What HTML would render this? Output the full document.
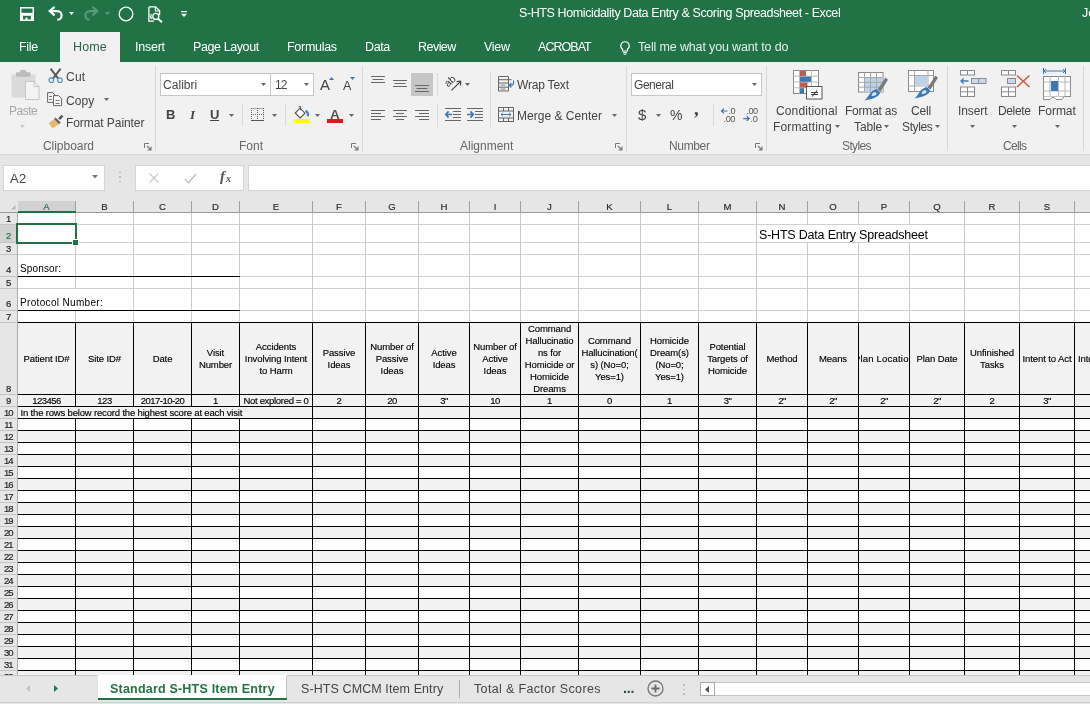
<!DOCTYPE html>
<html lang="en">
<head>
<meta charset="utf-8">
<title>S-HTS Homicidality Data Entry &amp; Scoring Spreadsheet - Excel</title>
<style>
html,body{margin:0;padding:0;}
body{width:1090px;height:704px;overflow:hidden;background:#e6e6e6;font-family:"Liberation Sans",sans-serif;}
#app{position:relative;width:1090px;height:704px;overflow:hidden;background:#e6e6e6;}
.t{will-change:transform;position:absolute;white-space:nowrap;line-height:1;}
svg{position:absolute;overflow:visible;}
.cell{-webkit-text-stroke:0.15px #000;position:absolute;overflow:hidden;display:flex;align-items:center;justify-content:center;text-align:center;font-size:9.5px;line-height:12px;color:#000;box-sizing:border-box;}
.cell span{display:block;white-space:nowrap;}
.hdr{position:absolute;font-size:9.6px;line-height:12px;color:#262626;text-align:center;-webkit-text-stroke:0.15px #262626;}
.rn{position:absolute;left:0;width:16.5px;font-size:9.5px;line-height:12px;color:#1a1a1a;text-align:center;letter-spacing:-1px;-webkit-text-stroke:0.2px #1a1a1a;}

</style>
</head>
<body>
<div id="app">
<div style="position:absolute;left:0px;top:0px;width:1090px;height:62px;background:#217346;"></div>
<div style="position:absolute;left:60px;top:32px;width:60px;height:30px;background:#f1f1f1;"></div>
<div style="position:absolute;left:0px;top:62px;width:1090px;height:92px;background:#f1f1f1;"></div>
<div style="position:absolute;left:0px;top:154px;width:1090px;height:1px;background:#d6d6d6;"></div>
<span class="t" style="left:518.60px;top:7.25px;font-size:12.5px;color:#fff;letter-spacing:-0.395px;">S-HTS Homicidality Data Entry &amp; Scoring Spreadsheet - Excel</span>
<span class="t" style="left:1081.60px;top:7.25px;font-size:12.5px;color:#fff;">Je</span>
<span class="t" style="left:18.60px;top:40.75px;font-size:12.5px;color:#fff;letter-spacing:-0.339px;">File</span>
<span class="t" style="left:72.60px;top:40.75px;font-size:12.5px;color:#2a6446;letter-spacing:0.114px;">Home</span>
<span class="t" style="left:134.60px;top:40.75px;font-size:12.5px;color:#fff;letter-spacing:-0.244px;">Insert</span>
<span class="t" style="left:192.60px;top:40.75px;font-size:12.5px;color:#fff;letter-spacing:-0.400px;">Page Layout</span>
<span class="t" style="left:286.60px;top:40.75px;font-size:12.5px;color:#fff;letter-spacing:-0.287px;">Formulas</span>
<span class="t" style="left:364.60px;top:40.75px;font-size:12.5px;color:#fff;letter-spacing:-0.402px;">Data</span>
<span class="t" style="left:417.60px;top:40.75px;font-size:12.5px;color:#fff;letter-spacing:-0.533px;">Review</span>
<span class="t" style="left:483.60px;top:40.75px;font-size:12.5px;color:#fff;letter-spacing:-0.269px;">View</span>
<span class="t" style="left:537.60px;top:40.75px;font-size:12.5px;color:#fff;letter-spacing:-0.957px;">ACROBAT</span>
<span class="t" style="left:637.60px;top:40.75px;font-size:12.5px;color:#e3efe8;letter-spacing:-0.146px;">Tell me what you want to do</span>
<div style="position:absolute;left:155px;top:66px;width:1px;height:85px;background:#d8d8d8;"></div>
<div style="position:absolute;left:362px;top:66px;width:1px;height:85px;background:#d8d8d8;"></div>
<div style="position:absolute;left:626px;top:66px;width:1px;height:85px;background:#d8d8d8;"></div>
<div style="position:absolute;left:766px;top:66px;width:1px;height:85px;background:#d8d8d8;"></div>
<div style="position:absolute;left:947px;top:66px;width:1px;height:85px;background:#d8d8d8;"></div>
<div style="position:absolute;left:1083px;top:66px;width:1px;height:85px;background:#d8d8d8;"></div>
<span class="t" style="left:43.00px;top:140.00px;font-size:12px;color:#666;letter-spacing:-0.042px;">Clipboard</span>
<span class="t" style="left:239.00px;top:140.00px;font-size:12px;color:#666;">Font</span>
<span class="t" style="left:459.90px;top:140.00px;font-size:12px;color:#666;letter-spacing:-0.008px;">Alignment</span>
<span class="t" style="left:668.50px;top:140.00px;font-size:12px;color:#666;letter-spacing:-0.348px;">Number</span>
<span class="t" style="left:842.00px;top:140.00px;font-size:12px;color:#666;letter-spacing:-0.615px;">Styles</span>
<span class="t" style="left:1003.30px;top:140.00px;font-size:12px;color:#666;letter-spacing:-0.654px;">Cells</span>
<span class="t" style="left:9.20px;top:104.50px;font-size:12px;color:#a8a8a8;letter-spacing:-0.498px;">Paste</span>
<span class="t" style="left:66.00px;top:71.00px;font-size:12px;color:#444;letter-spacing:0.237px;">Cut</span>
<span class="t" style="left:66.00px;top:94.50px;font-size:12px;color:#444;letter-spacing:0.096px;">Copy</span>
<span class="t" style="left:66.00px;top:117.00px;font-size:12px;color:#444;letter-spacing:-0.069px;">Format Painter</span>
<div style="position:absolute;left:160px;top:73px;width:111px;height:23px;background:#fff;box-sizing:border-box;border:1px solid #c6c6c6;"></div>
<div style="position:absolute;left:270px;top:73px;width:44px;height:23px;background:#fff;box-sizing:border-box;border:1px solid #c6c6c6;"></div>
<span class="t" style="left:163.10px;top:78.50px;font-size:12px;color:#444;letter-spacing:0.041px;">Calibri</span>
<span class="t" style="left:274.60px;top:78.50px;font-size:12px;color:#444;letter-spacing:-1.030px;">12</span>
<span class="t" style="left:165.60px;top:107.50px;font-size:13px;color:#444;font-weight:bold;">B</span>
<span class="t" style="left:189.60px;top:107.50px;font-size:13px;color:#444;font-weight:bold;font-style:italic;font-family:'Liberation Serif', serif;">I</span>
<span class="t" style="left:210.10px;top:107.50px;font-size:13px;color:#444;font-weight:bold;">U</span>
<div style="position:absolute;left:210px;top:120px;width:9px;height:1px;background:#444;"></div>
<div style="position:absolute;left:242px;top:104px;width:1px;height:22px;background:#dadada;"></div>
<div style="position:absolute;left:285px;top:104px;width:1px;height:22px;background:#dadada;"></div>
<span class="t" style="left:320.10px;top:77.00px;font-size:15px;color:#444;">A</span>
<span class="t" style="left:343.10px;top:79.75px;font-size:12.5px;color:#444;">A</span>
<span class="t" style="left:329.90px;top:107.75px;font-size:13.5px;color:#555;font-weight:bold;">A</span>
<div style="position:absolute;left:327px;top:119px;width:16px;height:4px;background:#e2171c;"></div>
<div style="position:absolute;left:294px;top:119px;width:16px;height:4px;background:#ffff00;"></div>
<div style="position:absolute;left:411px;top:73px;width:22px;height:23px;background:#c6c6c6;"></div>
<div style="position:absolute;left:437px;top:73px;width:1px;height:23px;background:#dadada;"></div>
<div style="position:absolute;left:437px;top:104px;width:1px;height:23px;background:#dadada;"></div>
<div style="position:absolute;left:490px;top:72px;width:1px;height:55px;background:#dadada;"></div>
<span class="t" style="left:517.40px;top:79.00px;font-size:12px;color:#444;letter-spacing:-0.198px;">Wrap Text</span>
<span class="t" style="left:517.40px;top:110.00px;font-size:12px;color:#444;letter-spacing:0.021px;">Merge &amp; Center</span>
<div style="position:absolute;left:631px;top:73px;width:131px;height:23px;background:#fff;box-sizing:border-box;border:1px solid #c6c6c6;"></div>
<span class="t" style="left:634.40px;top:78.50px;font-size:12px;color:#444;letter-spacing:-0.458px;">General</span>
<span class="t" style="left:638.30px;top:107.00px;font-size:15px;color:#444;">$</span>
<span class="t" style="left:670.20px;top:107.50px;font-size:14px;color:#444;">%</span>
<span class="t" style="left:694.20px;top:99.00px;font-size:19px;color:#444;font-weight:bold;font-family:'Liberation Serif', serif;">,</span>
<div style="position:absolute;left:713px;top:104px;width:1px;height:22px;background:#dadada;"></div>
<span class="t" style="left:776.40px;top:104.70px;font-size:12px;color:#444;letter-spacing:0.132px;">Conditional</span>
<span class="t" style="left:773.10px;top:120.70px;font-size:12px;color:#444;letter-spacing:0.134px;">Formatting</span>
<span class="t" style="left:845.10px;top:104.70px;font-size:12px;color:#444;letter-spacing:-0.213px;">Format as</span>
<span class="t" style="left:853.50px;top:120.70px;font-size:12px;color:#444;letter-spacing:-0.098px;">Table</span>
<span class="t" style="left:911.20px;top:104.70px;font-size:12px;color:#444;letter-spacing:-0.193px;">Cell</span>
<span class="t" style="left:901.90px;top:120.70px;font-size:12px;color:#444;letter-spacing:-0.365px;">Styles</span>
<span class="t" style="left:957.60px;top:104.70px;font-size:12px;color:#444;letter-spacing:-0.086px;">Insert</span>
<span class="t" style="left:998.30px;top:104.70px;font-size:12px;color:#444;letter-spacing:-0.365px;">Delete</span>
<span class="t" style="left:1038.30px;top:104.70px;font-size:12px;color:#444;letter-spacing:-0.036px;">Format</span>
<svg style="left:20px;top:7px" width="14" height="14" viewBox="0 0 14 14"><path d="M0.75 0.75H13.25V13.25H0.75Z" fill="none" stroke="#fff" stroke-width="1.5"/><rect x="0.75" y="5.8" width="12.5" height="3" fill="#fff"/><rect x="0.75" y="8.6" width="2.3" height="4.6" fill="#fff"/><rect x="10.8" y="8.6" width="2.4" height="4.6" fill="#fff"/><rect x="5.4" y="10.6" width="2.2" height="2.6" fill="#fff"/></svg>
<svg style="left:48px;top:6px" width="16" height="15" viewBox="0 0 16 15"><path d="M2.2 5.1H9.3A4.3 4.3 0 0 1 9.3 13.7" fill="none" stroke="#fff" stroke-width="2.2"/><path d="M6.6 0.8L1.7 5.1L6.6 9.4" fill="none" stroke="#fff" stroke-width="2.2"/></svg>
<svg style="left:69.0px;top:12.0px" width="5" height="3" viewBox="0 0 5 3"><path d="M0 0H5L2.5 3Z" fill="#fff"/></svg>
<svg style="left:83px;top:6px" width="16" height="15" viewBox="0 0 16 15"><path d="M13.8 5.1H6.7A4.3 4.3 0 0 0 6.7 13.7" fill="none" stroke="#5a9a76" stroke-width="2.2"/><path d="M9.4 0.8L14.3 5.1L9.4 9.4" fill="none" stroke="#5a9a76" stroke-width="2.2"/></svg>
<svg style="left:104.5px;top:12.0px" width="5" height="3" viewBox="0 0 5 3"><path d="M0 0H5L2.5 3Z" fill="#5a9a76"/></svg>
<svg style="left:118px;top:6px" width="16" height="16" viewBox="0 0 16 16"><circle cx="8" cy="8" r="6.8" fill="none" stroke="#fff" stroke-width="1.3"/></svg>
<svg style="left:148px;top:6px" width="16" height="17" viewBox="0 0 16 17"><path d="M0.9 0.9H7.6L11.6 4.8V9M6 15.2H0.9V0.9" fill="none" stroke="#fff" stroke-width="1.3"/><path d="M7.4 1V5H11.4" fill="none" stroke="#fff" stroke-width="1.1"/><circle cx="7.8" cy="10.4" r="3" fill="none" stroke="#fff" stroke-width="1.3"/><path d="M10 12.7L14 16.2" stroke="#fff" stroke-width="1.8"/><path d="M3.6 8C2.4 9.4 2.4 11.4 3.6 12.8" stroke="#fff" stroke-width="1.1" fill="none"/></svg>
<svg style="left:180.5px;top:10.8px" width="6" height="6" viewBox="0 0 6 6"><rect x="0" y="0" width="6" height="1.2" fill="#fff"/><path d="M0 2.8H6L3 5.9Z" fill="#fff"/></svg>
<svg style="left:620px;top:41px" width="10" height="14" viewBox="0 0 10 14"><path d="M5 0.7A4.1 4.1 0 0 0 2.6 8.2V10H7.4V8.2A4.1 4.1 0 0 0 5 0.7Z" fill="none" stroke="#fff" stroke-width="1.1"/><path d="M3 11.6H7M3.6 13.2H6.4" stroke="#fff" stroke-width="1"/></svg>
<svg style="left:10.5px;top:70px" width="29" height="30" viewBox="0 0 29 30"><rect x="0.5" y="4.5" width="24" height="23" fill="#dadada"/><rect x="5" y="2.2" width="14.5" height="4.6" rx="1" fill="#bcbcbc"/><rect x="9" y="0" width="6.4" height="4" rx="1.4" fill="#bcbcbc"/><path d="M14.5 11.5H23L28 16.5V29.5H14.5Z" fill="#f4f4f4" stroke="#c6c6c6" stroke-width="1"/><path d="M23 11.5V16.5H28" fill="none" stroke="#c6c6c6" stroke-width="1"/></svg>
<svg style="left:19.8px;top:124.8px" width="5" height="3" viewBox="0 0 5 3"><path d="M0 0H5L2.5 3Z" fill="#c9c9c9"/></svg>
<svg style="left:47.5px;top:68px" width="16" height="16" viewBox="0 0 16 16"><path d="M2.6 0.6L10.8 11.4M12.6 0.6L4.4 11.4" stroke="#595959" stroke-width="1.9" fill="none"/><circle cx="3.3" cy="12.2" r="2.3" fill="#f1f1f1" stroke="#5b8fc7" stroke-width="1.2"/><circle cx="11.9" cy="12.2" r="2.3" fill="#f1f1f1" stroke="#5b8fc7" stroke-width="1.2"/></svg>
<svg style="left:47px;top:92px" width="16" height="15" viewBox="0 0 16 15"><path d="M0.6 0.6H5.6L8 3V10.4H0.6Z" fill="#f8f8f8" stroke="#666" stroke-width="1"/><path d="M6.5 3.6H11.6L14.6 6.6V13.6H6.5Z" fill="#f8f8f8" stroke="#666" stroke-width="1"/><path d="M2 4.5H5M2 7.5H5M8.5 8.5H12.5M8.5 11.5H12.5" stroke="#777" stroke-width="1"/></svg>
<svg style="left:104.0px;top:98.0px" width="5" height="3" viewBox="0 0 5 3"><path d="M0 0H5L2.5 3Z" fill="#666"/></svg>
<svg style="left:48px;top:114px" width="16" height="15" viewBox="0 0 16 15"><path d="M10.2 4.2L13.6 0.8L15.4 2.6L12 6Z" fill="#555"/><path d="M7.6 3.4L12.8 8.6L10.8 10.2L6 5.2Z" fill="#666"/><path d="M5.8 5.4L10.6 10.4L4.6 14.2L0.6 9.2Z" fill="#eab56c"/></svg>
<svg style="left:143.5px;top:143px" width="8" height="8" viewBox="0 0 8 8"><path d="M0.5 5V0.5H5" fill="none" stroke="#777" stroke-width="1"/><path d="M3 3L7 7M7 3.5V7H3.5" fill="none" stroke="#777" stroke-width="1.1"/></svg>
<svg style="left:261.0px;top:83.0px" width="5" height="3" viewBox="0 0 5 3"><path d="M0 0H5L2.5 3Z" fill="#666"/></svg>
<svg style="left:304.0px;top:83.0px" width="5" height="3" viewBox="0 0 5 3"><path d="M0 0H5L2.5 3Z" fill="#666"/></svg>
<svg style="left:329px;top:76.5px" width="5" height="3" viewBox="0 0 5 3"><path d="M0 3H5L2.5 0Z" fill="#3b78b5"/></svg>
<svg style="left:350px;top:77px" width="5" height="3" viewBox="0 0 5 3"><path d="M0 0H5L2.5 3Z" fill="#3b78b5"/></svg>
<svg style="left:229.0px;top:113.5px" width="5" height="3" viewBox="0 0 5 3"><path d="M0 0H5L2.5 3Z" fill="#666"/></svg>
<svg style="left:251px;top:108px" width="13" height="13" viewBox="0 0 13 13"><path d="M0.5 0.5H12.5M12.5 0V12M0.5 0V12M6.5 0V12M0 6.5H13" stroke="#666" stroke-width="1" stroke-dasharray="1 1" fill="none"/><path d="M0 12.5H13" stroke="#555" stroke-width="1"/></svg>
<svg style="left:271.5px;top:113.5px" width="5" height="3" viewBox="0 0 5 3"><path d="M0 0H5L2.5 3Z" fill="#666"/></svg>
<svg style="left:294px;top:106px" width="16" height="13" viewBox="0 0 16 13"><path d="M6 2.2L11 7.2L6.2 12L1.2 7Z" fill="#fff" stroke="#555" stroke-width="1.1"/><path d="M4.6 0.6H6.6V4.2" stroke="#555" stroke-width="1" fill="none"/><path d="M11.6 4.8C13.6 5.8 14.4 7.6 13.8 10.2" fill="none" stroke="#4a7ebb" stroke-width="2.2"/></svg>
<svg style="left:315.0px;top:113.5px" width="5" height="3" viewBox="0 0 5 3"><path d="M0 0H5L2.5 3Z" fill="#666"/></svg>
<svg style="left:348.5px;top:113.5px" width="5" height="3" viewBox="0 0 5 3"><path d="M0 0H5L2.5 3Z" fill="#666"/></svg>
<svg style="left:350.5px;top:143px" width="8" height="8" viewBox="0 0 8 8"><path d="M0.5 5V0.5H5" fill="none" stroke="#777" stroke-width="1"/><path d="M3 3L7 7M7 3.5V7H3.5" fill="none" stroke="#777" stroke-width="1.1"/></svg>
<svg style="left:371px;top:76px" width="14" height="9" viewBox="0 0 14 9"><rect x="0.0" y="0" width="14" height="1" fill="#666"/><rect x="1.5" y="3" width="11" height="1" fill="#666"/><rect x="0.0" y="6" width="14" height="1" fill="#666"/></svg>
<svg style="left:393px;top:80px" width="14" height="9" viewBox="0 0 14 9"><rect x="0.0" y="0" width="14" height="1" fill="#666"/><rect x="1.5" y="3" width="11" height="1" fill="#666"/><rect x="0.0" y="6" width="14" height="1" fill="#666"/></svg>
<svg style="left:415px;top:85px" width="14" height="9" viewBox="0 0 14 9"><rect x="0.0" y="0" width="14" height="1" fill="#666"/><rect x="1.5" y="3" width="11" height="1" fill="#666"/><rect x="0.0" y="6" width="14" height="1" fill="#666"/></svg>
<svg style="left:371px;top:110px" width="14" height="12" viewBox="0 0 14 12"><rect x="0" y="0" width="14" height="1" fill="#666"/><rect x="0" y="3" width="10" height="1" fill="#666"/><rect x="0" y="6" width="14" height="1" fill="#666"/><rect x="0" y="9" width="10" height="1" fill="#666"/></svg>
<svg style="left:393px;top:110px" width="14" height="12" viewBox="0 0 14 12"><rect x="0.0" y="0" width="14" height="1" fill="#666"/><rect x="3.0" y="3" width="8" height="1" fill="#666"/><rect x="0.0" y="6" width="14" height="1" fill="#666"/><rect x="3.0" y="9" width="8" height="1" fill="#666"/></svg>
<svg style="left:415px;top:110px" width="14" height="12" viewBox="0 0 14 12"><rect x="0" y="0" width="14" height="1" fill="#666"/><rect x="4" y="3" width="10" height="1" fill="#666"/><rect x="0" y="6" width="14" height="1" fill="#666"/><rect x="4" y="9" width="10" height="1" fill="#666"/></svg>
<svg style="left:444px;top:74px" width="19" height="18" viewBox="0 0 19 18"><text x="0" y="0" font-size="10.5" font-family="Liberation Sans, sans-serif" fill="#444" transform="translate(4,13.6) rotate(-42)">ab</text><path d="M7.4 16.4L16.4 7.6M16.8 7.2L12.6 7.6M16.8 7.2L16.4 11.4" stroke="#444" stroke-width="1.2" fill="none"/></svg>
<svg style="left:465.0px;top:83.0px" width="5" height="3" viewBox="0 0 5 3"><path d="M0 0H5L2.5 3Z" fill="#666"/></svg>
<svg style="left:445px;top:108px" width="16" height="13" viewBox="0 0 16 13"><path d="M0 0.5H16M8 3.5H16M8 6.5H16M8 9.5H16M0 12.5H16" stroke="#666" stroke-width="1"/><path d="M0.8 6.5H7M3.6 3.4L0.8 6.5L3.6 9.6" stroke="#3b78b5" stroke-width="1.7" fill="none"/></svg>
<svg style="left:467px;top:108px" width="16" height="13" viewBox="0 0 16 13"><path d="M0 0.5H16M8 3.5H16M8 6.5H16M8 9.5H16M0 12.5H16" stroke="#666" stroke-width="1"/><path d="M0 6.5H6.2M3.4 3.4L6.2 6.5L3.4 9.6" stroke="#3b78b5" stroke-width="1.7" fill="none"/></svg>
<svg style="left:498px;top:76px" width="17" height="16" viewBox="0 0 17 16"><path d="M0.5 0.5H10.5V15H0.5ZM0.5 3.7H13.6M0.5 7H10.5M0.5 11.2H10.5" fill="none" stroke="#666" stroke-width="1"/><path d="M2.5 9.1H7.5M2.5 13.1H7.5" stroke="#888" stroke-width="1"/><path d="M15.6 4.6V6.4Q15.6 9.2 12.8 9.2H11.4M13.4 6.9L11.2 9.2L13.4 11.5" stroke="#3b78b5" stroke-width="1.2" fill="none"/></svg>
<svg style="left:498px;top:107px" width="16" height="15" viewBox="0 0 16 15"><rect x="0.5" y="0.5" width="15" height="14" fill="none" stroke="#666"/><path d="M0.5 4H15.5M0.5 11H15.5M5.5 0.5V4M10.5 0.5V4M5.5 11V14.5M10.5 11V14.5" stroke="#666" stroke-width="1"/><path d="M3 7.5H13M4.8 5.8L3 7.5L4.8 9.2M11.2 5.8L13 7.5L11.2 9.2" stroke="#3b78b5" stroke-width="1" fill="none"/></svg>
<svg style="left:612.0px;top:113.5px" width="5" height="3" viewBox="0 0 5 3"><path d="M0 0H5L2.5 3Z" fill="#666"/></svg>
<svg style="left:615px;top:143px" width="8" height="8" viewBox="0 0 8 8"><path d="M0.5 5V0.5H5" fill="none" stroke="#777" stroke-width="1"/><path d="M3 3L7 7M7 3.5V7H3.5" fill="none" stroke="#777" stroke-width="1.1"/></svg>
<svg style="left:752.0px;top:83.0px" width="5" height="3" viewBox="0 0 5 3"><path d="M0 0H5L2.5 3Z" fill="#666"/></svg>
<svg style="left:656.0px;top:113.5px" width="5" height="3" viewBox="0 0 5 3"><path d="M0 0H5L2.5 3Z" fill="#666"/></svg>
<svg style="left:720.5px;top:106.5px" width="16" height="15" viewBox="0 0 16 15"><path d="M0.5 4H6.5M3 1.6L0.5 4L3 6.4" stroke="#3b78b5" stroke-width="1.2" fill="none"/><text x="7.4" y="6.6" font-size="9.2" letter-spacing="-0.5" font-family="Liberation Sans, sans-serif" fill="#555">.0</text><text x="2.6" y="14.6" font-size="9.2" letter-spacing="-0.5" font-family="Liberation Sans, sans-serif" fill="#555">.00</text></svg>
<svg style="left:742.5px;top:106.5px" width="16" height="15" viewBox="0 0 16 15"><text x="3.4" y="6.6" font-size="9.2" letter-spacing="-0.5" font-family="Liberation Sans, sans-serif" fill="#555">.00</text><path d="M0.2 11.6H6.2M3.7 9.2L6.2 11.6L3.7 14" stroke="#3b78b5" stroke-width="1.2" fill="none"/><text x="7.6" y="14.6" font-size="9.2" letter-spacing="-0.5" font-family="Liberation Sans, sans-serif" fill="#555">.0</text></svg>
<svg style="left:754.5px;top:143px" width="8" height="8" viewBox="0 0 8 8"><path d="M0.5 5V0.5H5" fill="none" stroke="#777" stroke-width="1"/><path d="M3 3L7 7M7 3.5V7H3.5" fill="none" stroke="#777" stroke-width="1.1"/></svg>
<svg style="left:793px;top:70px" width="30" height="30" viewBox="0 0 30 30"><rect x="0.5" y="0.5" width="25" height="23" fill="#fff" stroke="#8a8a8a"/><path d="M0.5 6.2H25.5M0.5 12H25.5M0.5 17.8H25.5M6.5 0.5V23.5M18.5 0.5V23.5" stroke="#b8b8b8" stroke-width="1"/><rect x="7" y="0.8" width="6" height="5.2" fill="#c85a4c"/><rect x="7" y="6.6" width="11" height="5.2" fill="#3b78b5"/><rect x="7" y="12.4" width="7.5" height="5.2" fill="#c85a4c"/><rect x="7" y="18.2" width="4" height="5.2" fill="#3b78b5"/><rect x="13.5" y="16.5" width="15.5" height="12.5" fill="#fff" stroke="#555"/><text x="17" y="27" font-size="11" font-family="DejaVu Sans, sans-serif" fill="#333">≠</text></svg>
<svg style="left:834.5px;top:124.5px" width="5" height="3" viewBox="0 0 5 3"><path d="M0 0H5L2.5 3Z" fill="#666"/></svg>
<svg style="left:858px;top:71.5px" width="30" height="29" viewBox="0 0 30 29"><rect x="0.5" y="0.5" width="24.5" height="19.5" fill="#fff" stroke="#8a8a8a"/><rect x="6.5" y="5.5" width="18.5" height="14.5" fill="#bdd3ea"/><path d="M0.5 5.5H25M0.5 10.3H25M0.5 15.2H25M6.5 0.5V20M12.5 0.5V20M18.5 0.5V20" stroke="#a8a8a8" stroke-width="1"/><path d="M19.6 17.4L27.4 5.6L30 7.8L22.4 19.8Z" fill="#7a7a7a"/><path d="M18.4 17L22.2 20.4C21 24.2 16.5 26.8 6.5 28.4C10.5 25.6 11.5 19 18.4 17Z" fill="#3b78b5"/><path d="M15.4 20.6C17 19.6 18.8 20.4 18.6 21.8C18.2 23.4 15.4 24.4 13.6 24C13.6 22.6 14.2 21.4 15.4 20.6Z" fill="#d6e4f3"/></svg>
<svg style="left:884.0px;top:124.5px" width="5" height="3" viewBox="0 0 5 3"><path d="M0 0H5L2.5 3Z" fill="#666"/></svg>
<svg style="left:908px;top:70px" width="30" height="29" viewBox="0 0 30 29"><rect x="0.5" y="0.5" width="25" height="21" fill="#fff" stroke="#8a8a8a"/><path d="M0.5 5.5H25.5M0.5 16H25.5M6.5 0.5V21.5M20 0.5V21.5" stroke="#a8a8a8" stroke-width="1"/><rect x="7" y="6" width="12.5" height="9.5" fill="#bdd3ea"/><path d="M19.6 17.4L27.4 5.6L30 7.8L22.4 19.8Z" fill="#7a7a7a"/><path d="M18.4 17L22.2 20.4C21 24.2 16.5 26.8 6.5 28.4C10.5 25.6 11.5 19 18.4 17Z" fill="#3b78b5"/><path d="M15.4 20.6C17 19.6 18.8 20.4 18.6 21.8C18.2 23.4 15.4 24.4 13.6 24C13.6 22.6 14.2 21.4 15.4 20.6Z" fill="#d6e4f3"/></svg>
<svg style="left:935.0px;top:124.5px" width="5" height="3" viewBox="0 0 5 3"><path d="M0 0H5L2.5 3Z" fill="#666"/></svg>
<svg style="left:960px;top:70px" width="27" height="28" viewBox="0 0 27 28"><rect x="0.5" y="0.5" width="14" height="4.5" fill="#fff" stroke="#8a8a8a"/><path d="M7.5 0.5V5" stroke="#8a8a8a"/><rect x="11.5" y="8.5" width="14.5" height="5" fill="#c9d9ec" stroke="#8a8a8a"/><path d="M18.7 8.5V13.5" stroke="#8a8a8a"/><path d="M1 11H8.5M3.6 8.4L1 11L3.6 13.6" stroke="#3b78b5" stroke-width="1.3" fill="none"/><rect x="0.5" y="17" width="14" height="9.5" fill="#fff" stroke="#8a8a8a"/><path d="M7.5 17V26.5M0.5 21.8H14.5" stroke="#8a8a8a"/></svg>
<svg style="left:970.0px;top:125.0px" width="5" height="3" viewBox="0 0 5 3"><path d="M0 0H5L2.5 3Z" fill="#666"/></svg>
<svg style="left:1001px;top:70px" width="30" height="28" viewBox="0 0 30 28"><rect x="0.5" y="0.5" width="14" height="4.5" fill="#fff" stroke="#8a8a8a"/><path d="M7.5 0.5V5" stroke="#8a8a8a"/><rect x="6.5" y="8.5" width="8" height="5" fill="#c9d9ec" stroke="#8a8a8a"/><rect x="0.5" y="17" width="14" height="9.5" fill="#fff" stroke="#8a8a8a"/><path d="M7.5 17V26.5M0.5 21.8H14.5" stroke="#8a8a8a"/><path d="M16 5.5L28.5 17M28.5 5.5L16 17" stroke="#d0573f" stroke-width="1.5"/></svg>
<svg style="left:1011.5px;top:125.0px" width="5" height="3" viewBox="0 0 5 3"><path d="M0 0H5L2.5 3Z" fill="#666"/></svg>
<svg style="left:1043px;top:68px" width="29" height="32" viewBox="0 0 29 32"><path d="M1 3H22M3 1L1 3L3 5M20 1L22 3L20 5M0.5 0V6M22.5 0V6" stroke="#3b78b5" stroke-width="1" fill="none"/><rect x="0.5" y="8.5" width="27" height="20" fill="#fff" stroke="#8a8a8a"/><path d="M0.5 14H27.5M0.5 23H27.5M7 8.5V28.5M15.5 8.5V28.5M22 8.5V28.5" stroke="#b8b8b8"/><rect x="8" y="13" width="7" height="10" fill="#3b78b5"/><path d="M0.5 28.5V31.5H7L9 29.5H11L13 31.5H19L21 28.5" stroke="#8a8a8a" fill="#fff"/></svg>
<svg style="left:1055.0px;top:125.0px" width="5" height="3" viewBox="0 0 5 3"><path d="M0 0H5L2.5 3Z" fill="#666"/></svg>
<div style="position:absolute;left:3px;top:165px;width:102px;height:26px;background:#fff;box-sizing:border-box;border:1px solid #d4d4d4;"></div>
<span class="t" style="left:9.80px;top:171.50px;font-size:13px;color:#444;letter-spacing:0.347px;">A2</span>
<svg style="left:91.5px;top:175.25px" width="6" height="3.5" viewBox="0 0 6 3.5"><path d="M0 0H6L3.0 3.5Z" fill="#777"/></svg>
<div style="position:absolute;left:119px;top:171.5px;width:1.6px;height:1.6px;background:#b0b0b0;border-radius:1px;"></div>
<div style="position:absolute;left:119px;top:176px;width:1.6px;height:1.6px;background:#b0b0b0;border-radius:1px;"></div>
<div style="position:absolute;left:119px;top:180.5px;width:1.6px;height:1.6px;background:#b0b0b0;border-radius:1px;"></div>
<div style="position:absolute;left:135px;top:165px;width:109px;height:26px;background:#fff;box-sizing:border-box;border:1px solid #d4d4d4;"></div>
<svg style="left:149px;top:173px" width="10" height="10" viewBox="0 0 10 10"><path d="M0.7 0.7L9.3 9.3M9.3 0.7L0.7 9.3" stroke="#c2c2c2" stroke-width="1.2"/></svg>
<svg style="left:184px;top:172.5px" width="13" height="11" viewBox="0 0 13 11"><path d="M0.8 6L4.6 9.8L12.2 0.8" stroke="#c2c2c2" stroke-width="1.4" fill="none"/></svg>
<span class="t" style="left:219.80px;top:168.50px;font-size:15px;color:#555;font-weight:bold;font-style:italic;font-family:'Liberation Serif', serif;">f</span>
<span class="t" style="left:226.00px;top:173.50px;font-size:10px;color:#555;font-weight:bold;font-style:italic;font-family:'Liberation Serif', serif;">x</span>
<div style="position:absolute;left:248px;top:165px;width:850px;height:26px;background:#fff;box-sizing:border-box;border:1px solid #d4d4d4;"></div>
<div id="grid" style="position:absolute;left:0;top:200px;width:1090px;height:475px;background:#fff;overflow:hidden;">
<div style="position:absolute;left:0px;top:0px;width:1090px;height:13px;background:#e6e6e6;"></div>
<div style="position:absolute;left:0px;top:0px;width:18px;height:475px;background:#e6e6e6;"></div>
<div style="position:absolute;left:18px;top:1px;width:57px;height:11px;background:#d2d2d2;"></div>
<div style="position:absolute;left:0px;top:25px;width:17px;height:17px;background:#d2d2d2;"></div>
<div style="position:absolute;left:75px;top:1px;width:1px;height:11px;background:#a0a0a0;"></div>
<div style="position:absolute;left:133px;top:1px;width:1px;height:11px;background:#a0a0a0;"></div>
<div style="position:absolute;left:191px;top:1px;width:1px;height:11px;background:#a0a0a0;"></div>
<div style="position:absolute;left:239px;top:1px;width:1px;height:11px;background:#a0a0a0;"></div>
<div style="position:absolute;left:312px;top:1px;width:1px;height:11px;background:#a0a0a0;"></div>
<div style="position:absolute;left:365px;top:1px;width:1px;height:11px;background:#a0a0a0;"></div>
<div style="position:absolute;left:418px;top:1px;width:1px;height:11px;background:#a0a0a0;"></div>
<div style="position:absolute;left:469px;top:1px;width:1px;height:11px;background:#a0a0a0;"></div>
<div style="position:absolute;left:520px;top:1px;width:1px;height:11px;background:#a0a0a0;"></div>
<div style="position:absolute;left:578px;top:1px;width:1px;height:11px;background:#a0a0a0;"></div>
<div style="position:absolute;left:640px;top:1px;width:1px;height:11px;background:#a0a0a0;"></div>
<div style="position:absolute;left:698px;top:1px;width:1px;height:11px;background:#a0a0a0;"></div>
<div style="position:absolute;left:756px;top:1px;width:1px;height:11px;background:#a0a0a0;"></div>
<div style="position:absolute;left:807px;top:1px;width:1px;height:11px;background:#a0a0a0;"></div>
<div style="position:absolute;left:858px;top:1px;width:1px;height:11px;background:#a0a0a0;"></div>
<div style="position:absolute;left:909px;top:1px;width:1px;height:11px;background:#a0a0a0;"></div>
<div style="position:absolute;left:964px;top:1px;width:1px;height:11px;background:#a0a0a0;"></div>
<div style="position:absolute;left:1019px;top:1px;width:1px;height:11px;background:#a0a0a0;"></div>
<div style="position:absolute;left:1074px;top:1px;width:1px;height:11px;background:#a0a0a0;"></div>
<div style="position:absolute;left:1130px;top:1px;width:1px;height:11px;background:#a0a0a0;"></div>
<div style="position:absolute;left:17px;top:13px;width:1px;height:462px;background:#ababab;"></div>
<div style="position:absolute;left:0px;top:12px;width:1090px;height:1px;background:#999;"></div>
<div style="position:absolute;left:0px;top:24px;width:17px;height:1px;background:#c4c4c4;"></div>
<div style="position:absolute;left:0px;top:42px;width:17px;height:1px;background:#c4c4c4;"></div>
<div style="position:absolute;left:0px;top:54px;width:17px;height:1px;background:#c4c4c4;"></div>
<div style="position:absolute;left:0px;top:76px;width:17px;height:1px;background:#c4c4c4;"></div>
<div style="position:absolute;left:0px;top:88px;width:17px;height:1px;background:#c4c4c4;"></div>
<div style="position:absolute;left:0px;top:110px;width:17px;height:1px;background:#c4c4c4;"></div>
<div style="position:absolute;left:0px;top:122px;width:17px;height:1px;background:#c4c4c4;"></div>
<div style="position:absolute;left:0px;top:194px;width:17px;height:1px;background:#c4c4c4;"></div>
<div style="position:absolute;left:0px;top:206px;width:17px;height:1px;background:#c4c4c4;"></div>
<div style="position:absolute;left:0px;top:218px;width:17px;height:1px;background:#c4c4c4;"></div>
<div style="position:absolute;left:0px;top:230px;width:17px;height:1px;background:#c4c4c4;"></div>
<div style="position:absolute;left:0px;top:242px;width:17px;height:1px;background:#c4c4c4;"></div>
<div style="position:absolute;left:0px;top:254px;width:17px;height:1px;background:#c4c4c4;"></div>
<div style="position:absolute;left:0px;top:266px;width:17px;height:1px;background:#c4c4c4;"></div>
<div style="position:absolute;left:0px;top:278px;width:17px;height:1px;background:#c4c4c4;"></div>
<div style="position:absolute;left:0px;top:290px;width:17px;height:1px;background:#c4c4c4;"></div>
<div style="position:absolute;left:0px;top:302px;width:17px;height:1px;background:#c4c4c4;"></div>
<div style="position:absolute;left:0px;top:314px;width:17px;height:1px;background:#c4c4c4;"></div>
<div style="position:absolute;left:0px;top:326px;width:17px;height:1px;background:#c4c4c4;"></div>
<div style="position:absolute;left:0px;top:338px;width:17px;height:1px;background:#c4c4c4;"></div>
<div style="position:absolute;left:0px;top:350px;width:17px;height:1px;background:#c4c4c4;"></div>
<div style="position:absolute;left:0px;top:362px;width:17px;height:1px;background:#c4c4c4;"></div>
<div style="position:absolute;left:0px;top:374px;width:17px;height:1px;background:#c4c4c4;"></div>
<div style="position:absolute;left:0px;top:386px;width:17px;height:1px;background:#c4c4c4;"></div>
<div style="position:absolute;left:0px;top:398px;width:17px;height:1px;background:#c4c4c4;"></div>
<div style="position:absolute;left:0px;top:410px;width:17px;height:1px;background:#c4c4c4;"></div>
<div style="position:absolute;left:0px;top:422px;width:17px;height:1px;background:#c4c4c4;"></div>
<div style="position:absolute;left:0px;top:434px;width:17px;height:1px;background:#c4c4c4;"></div>
<div style="position:absolute;left:0px;top:446px;width:17px;height:1px;background:#c4c4c4;"></div>
<div style="position:absolute;left:0px;top:458px;width:17px;height:1px;background:#c4c4c4;"></div>
<div style="position:absolute;left:0px;top:470px;width:17px;height:1px;background:#c4c4c4;"></div>
<div style="position:absolute;left:0px;top:482px;width:17px;height:1px;background:#c4c4c4;"></div>
<svg style="left:10.5px;top:4.5px" width="4.5" height="4.5" viewBox="0 0 7 7"><path d="M7 0V7H0Z" fill="#b5b5b5"/></svg>
<div style="position:absolute;left:18px;top:11px;width:58px;height:2px;background:#217346;"></div>
<div style="position:absolute;left:18px;top:24px;width:1072px;height:1px;background:#d0d0d0;"></div>
<div style="position:absolute;left:18px;top:42px;width:1072px;height:1px;background:#d0d0d0;"></div>
<div style="position:absolute;left:18px;top:54px;width:1072px;height:1px;background:#d0d0d0;"></div>
<div style="position:absolute;left:18px;top:76px;width:1072px;height:1px;background:#d0d0d0;"></div>
<div style="position:absolute;left:18px;top:88px;width:1072px;height:1px;background:#d0d0d0;"></div>
<div style="position:absolute;left:18px;top:110px;width:1072px;height:1px;background:#d0d0d0;"></div>
<div style="position:absolute;left:18px;top:122px;width:1072px;height:1px;background:#d0d0d0;"></div>
<div style="position:absolute;left:75px;top:13px;width:1px;height:110px;background:#cbcbcb;"></div>
<div style="position:absolute;left:133px;top:13px;width:1px;height:110px;background:#cbcbcb;"></div>
<div style="position:absolute;left:191px;top:13px;width:1px;height:110px;background:#cbcbcb;"></div>
<div style="position:absolute;left:239px;top:13px;width:1px;height:110px;background:#cbcbcb;"></div>
<div style="position:absolute;left:312px;top:13px;width:1px;height:110px;background:#cbcbcb;"></div>
<div style="position:absolute;left:365px;top:13px;width:1px;height:110px;background:#cbcbcb;"></div>
<div style="position:absolute;left:418px;top:13px;width:1px;height:110px;background:#cbcbcb;"></div>
<div style="position:absolute;left:469px;top:13px;width:1px;height:110px;background:#cbcbcb;"></div>
<div style="position:absolute;left:520px;top:13px;width:1px;height:110px;background:#cbcbcb;"></div>
<div style="position:absolute;left:578px;top:13px;width:1px;height:110px;background:#cbcbcb;"></div>
<div style="position:absolute;left:640px;top:13px;width:1px;height:110px;background:#cbcbcb;"></div>
<div style="position:absolute;left:698px;top:13px;width:1px;height:110px;background:#cbcbcb;"></div>
<div style="position:absolute;left:756px;top:13px;width:1px;height:110px;background:#cbcbcb;"></div>
<div style="position:absolute;left:807px;top:13px;width:1px;height:110px;background:#cbcbcb;"></div>
<div style="position:absolute;left:858px;top:13px;width:1px;height:110px;background:#cbcbcb;"></div>
<div style="position:absolute;left:909px;top:13px;width:1px;height:110px;background:#cbcbcb;"></div>
<div style="position:absolute;left:964px;top:13px;width:1px;height:110px;background:#cbcbcb;"></div>
<div style="position:absolute;left:1019px;top:13px;width:1px;height:110px;background:#cbcbcb;"></div>
<div style="position:absolute;left:1074px;top:13px;width:1px;height:110px;background:#cbcbcb;"></div>
<div style="position:absolute;left:1130px;top:13px;width:1px;height:110px;background:#cbcbcb;"></div>
<div style="position:absolute;left:18px;top:123px;width:1072px;height:72px;background:#f2f2f2;"></div>
<div style="position:absolute;left:18px;top:195px;width:1072px;height:12px;background:#f2f2f2;"></div>
<div style="position:absolute;left:18px;top:207px;width:1072px;height:12px;background:#f2f2f2;"></div>
<div style="position:absolute;left:18px;top:231px;width:1072px;height:12px;background:#f2f2f2;"></div>
<div style="position:absolute;left:18px;top:255px;width:1072px;height:12px;background:#f2f2f2;"></div>
<div style="position:absolute;left:18px;top:279px;width:1072px;height:12px;background:#f2f2f2;"></div>
<div style="position:absolute;left:18px;top:303px;width:1072px;height:12px;background:#f2f2f2;"></div>
<div style="position:absolute;left:18px;top:327px;width:1072px;height:12px;background:#f2f2f2;"></div>
<div style="position:absolute;left:18px;top:351px;width:1072px;height:12px;background:#f2f2f2;"></div>
<div style="position:absolute;left:18px;top:375px;width:1072px;height:12px;background:#f2f2f2;"></div>
<div style="position:absolute;left:18px;top:399px;width:1072px;height:12px;background:#f2f2f2;"></div>
<div style="position:absolute;left:18px;top:423px;width:1072px;height:12px;background:#f2f2f2;"></div>
<div style="position:absolute;left:18px;top:447px;width:1072px;height:12px;background:#f2f2f2;"></div>
<div style="position:absolute;left:18px;top:471px;width:1072px;height:12px;background:#f2f2f2;"></div>
<div style="position:absolute;left:18px;top:122px;width:1072px;height:1px;background:#000;"></div>
<div style="position:absolute;left:18px;top:194px;width:1072px;height:1px;background:#000;"></div>
<div style="position:absolute;left:18px;top:206px;width:1072px;height:1px;background:#000;"></div>
<div style="position:absolute;left:18px;top:218px;width:1072px;height:1px;background:#000;"></div>
<div style="position:absolute;left:18px;top:230px;width:1072px;height:1px;background:#000;"></div>
<div style="position:absolute;left:18px;top:242px;width:1072px;height:1px;background:#000;"></div>
<div style="position:absolute;left:18px;top:254px;width:1072px;height:1px;background:#000;"></div>
<div style="position:absolute;left:18px;top:266px;width:1072px;height:1px;background:#000;"></div>
<div style="position:absolute;left:18px;top:278px;width:1072px;height:1px;background:#000;"></div>
<div style="position:absolute;left:18px;top:290px;width:1072px;height:1px;background:#000;"></div>
<div style="position:absolute;left:18px;top:302px;width:1072px;height:1px;background:#000;"></div>
<div style="position:absolute;left:18px;top:314px;width:1072px;height:1px;background:#000;"></div>
<div style="position:absolute;left:18px;top:326px;width:1072px;height:1px;background:#000;"></div>
<div style="position:absolute;left:18px;top:338px;width:1072px;height:1px;background:#000;"></div>
<div style="position:absolute;left:18px;top:350px;width:1072px;height:1px;background:#000;"></div>
<div style="position:absolute;left:18px;top:362px;width:1072px;height:1px;background:#000;"></div>
<div style="position:absolute;left:18px;top:374px;width:1072px;height:1px;background:#000;"></div>
<div style="position:absolute;left:18px;top:386px;width:1072px;height:1px;background:#000;"></div>
<div style="position:absolute;left:18px;top:398px;width:1072px;height:1px;background:#000;"></div>
<div style="position:absolute;left:18px;top:410px;width:1072px;height:1px;background:#000;"></div>
<div style="position:absolute;left:18px;top:422px;width:1072px;height:1px;background:#000;"></div>
<div style="position:absolute;left:18px;top:434px;width:1072px;height:1px;background:#000;"></div>
<div style="position:absolute;left:18px;top:446px;width:1072px;height:1px;background:#000;"></div>
<div style="position:absolute;left:18px;top:458px;width:1072px;height:1px;background:#000;"></div>
<div style="position:absolute;left:18px;top:470px;width:1072px;height:1px;background:#000;"></div>
<div style="position:absolute;left:18px;top:482px;width:1072px;height:1px;background:#000;"></div>
<div style="position:absolute;left:75px;top:122px;width:1px;height:353px;background:#000;"></div>
<div style="position:absolute;left:133px;top:122px;width:1px;height:353px;background:#000;"></div>
<div style="position:absolute;left:191px;top:122px;width:1px;height:353px;background:#000;"></div>
<div style="position:absolute;left:239px;top:122px;width:1px;height:353px;background:#000;"></div>
<div style="position:absolute;left:312px;top:122px;width:1px;height:353px;background:#000;"></div>
<div style="position:absolute;left:365px;top:122px;width:1px;height:353px;background:#000;"></div>
<div style="position:absolute;left:418px;top:122px;width:1px;height:353px;background:#000;"></div>
<div style="position:absolute;left:469px;top:122px;width:1px;height:353px;background:#000;"></div>
<div style="position:absolute;left:520px;top:122px;width:1px;height:353px;background:#000;"></div>
<div style="position:absolute;left:578px;top:122px;width:1px;height:353px;background:#000;"></div>
<div style="position:absolute;left:640px;top:122px;width:1px;height:353px;background:#000;"></div>
<div style="position:absolute;left:698px;top:122px;width:1px;height:353px;background:#000;"></div>
<div style="position:absolute;left:756px;top:122px;width:1px;height:353px;background:#000;"></div>
<div style="position:absolute;left:807px;top:122px;width:1px;height:353px;background:#000;"></div>
<div style="position:absolute;left:858px;top:122px;width:1px;height:353px;background:#000;"></div>
<div style="position:absolute;left:909px;top:122px;width:1px;height:353px;background:#000;"></div>
<div style="position:absolute;left:964px;top:122px;width:1px;height:353px;background:#000;"></div>
<div style="position:absolute;left:1019px;top:122px;width:1px;height:353px;background:#000;"></div>
<div style="position:absolute;left:1074px;top:122px;width:1px;height:353px;background:#000;"></div>
<div style="position:absolute;left:1130px;top:122px;width:1px;height:353px;background:#000;"></div>
<div style="position:absolute;left:75px;top:207px;width:1px;height:11px;background:#f2f2f2;"></div>
<div style="position:absolute;left:133px;top:207px;width:1px;height:11px;background:#f2f2f2;"></div>
<div style="position:absolute;left:191px;top:207px;width:1px;height:11px;background:#f2f2f2;"></div>
<div style="position:absolute;left:239px;top:207px;width:1px;height:11px;background:#f2f2f2;"></div>
<div style="position:absolute;left:18px;top:76px;width:222px;height:1px;background:#000;"></div>
<div style="position:absolute;left:18px;top:110px;width:222px;height:1px;background:#000;"></div>
<div style="position:absolute;left:807px;top:25px;width:1px;height:17px;background:#fff;"></div>
<div style="position:absolute;left:858px;top:25px;width:1px;height:17px;background:#fff;"></div>
<div style="position:absolute;left:909px;top:25px;width:1px;height:17px;background:#fff;"></div>
<div style="position:absolute;left:75px;top:89px;width:1px;height:21px;background:#fff;"></div>
<div style="position:absolute;left:16px;top:23px;width:61px;height:21px;background:transparent;box-sizing:border-box;border:2px solid #217346;"></div>
<div style="position:absolute;left:72px;top:39px;width:5px;height:5px;background:#217346;border:1px solid #fff;box-sizing:content-box;"></div>
</div>
<div id="gtext" style="position:absolute;left:0;top:200px;width:1090px;height:475px;overflow:hidden;will-change:transform;">
<div class="hdr" style="left:18px;top:0.8px;width:57px;color:#217346;-webkit-text-stroke-color:#217346">A</div>
<div class="hdr" style="left:76px;top:0.8px;width:57px;color:#262626;-webkit-text-stroke-color:#262626">B</div>
<div class="hdr" style="left:134px;top:0.8px;width:57px;color:#262626;-webkit-text-stroke-color:#262626">C</div>
<div class="hdr" style="left:192px;top:0.8px;width:47px;color:#262626;-webkit-text-stroke-color:#262626">D</div>
<div class="hdr" style="left:240px;top:0.8px;width:72px;color:#262626;-webkit-text-stroke-color:#262626">E</div>
<div class="hdr" style="left:313px;top:0.8px;width:52px;color:#262626;-webkit-text-stroke-color:#262626">F</div>
<div class="hdr" style="left:366px;top:0.8px;width:52px;color:#262626;-webkit-text-stroke-color:#262626">G</div>
<div class="hdr" style="left:419px;top:0.8px;width:50px;color:#262626;-webkit-text-stroke-color:#262626">H</div>
<div class="hdr" style="left:470px;top:0.8px;width:50px;color:#262626;-webkit-text-stroke-color:#262626">I</div>
<div class="hdr" style="left:521px;top:0.8px;width:57px;color:#262626;-webkit-text-stroke-color:#262626">J</div>
<div class="hdr" style="left:579px;top:0.8px;width:61px;color:#262626;-webkit-text-stroke-color:#262626">K</div>
<div class="hdr" style="left:641px;top:0.8px;width:57px;color:#262626;-webkit-text-stroke-color:#262626">L</div>
<div class="hdr" style="left:699px;top:0.8px;width:57px;color:#262626;-webkit-text-stroke-color:#262626">M</div>
<div class="hdr" style="left:757px;top:0.8px;width:50px;color:#262626;-webkit-text-stroke-color:#262626">N</div>
<div class="hdr" style="left:808px;top:0.8px;width:50px;color:#262626;-webkit-text-stroke-color:#262626">O</div>
<div class="hdr" style="left:859px;top:0.8px;width:50px;color:#262626;-webkit-text-stroke-color:#262626">P</div>
<div class="hdr" style="left:910px;top:0.8px;width:54px;color:#262626;-webkit-text-stroke-color:#262626">Q</div>
<div class="hdr" style="left:965px;top:0.8px;width:54px;color:#262626;-webkit-text-stroke-color:#262626">R</div>
<div class="hdr" style="left:1020px;top:0.8px;width:54px;color:#262626;-webkit-text-stroke-color:#262626">S</div>
<div class="hdr" style="left:1075px;top:0.8px;width:55px;color:#262626;-webkit-text-stroke-color:#262626">T</div>
<div class="rn" style="top:13.3px;color:#262626;-webkit-text-stroke-color:#262626">1</div>
<div class="rn" style="top:29.6px;color:#217346;-webkit-text-stroke-color:#217346">2</div>
<div class="rn" style="top:43.3px;color:#262626;-webkit-text-stroke-color:#262626">3</div>
<div class="rn" style="top:63.8px;color:#262626;-webkit-text-stroke-color:#262626">4</div>
<div class="rn" style="top:77.3px;color:#262626;-webkit-text-stroke-color:#262626">5</div>
<div class="rn" style="top:97.8px;color:#262626;-webkit-text-stroke-color:#262626">6</div>
<div class="rn" style="top:111.3px;color:#262626;-webkit-text-stroke-color:#262626">7</div>
<div class="rn" style="top:183.3px;color:#262626;-webkit-text-stroke-color:#262626">8</div>
<div class="rn" style="top:195.3px;color:#262626;-webkit-text-stroke-color:#262626">9</div>
<div class="rn" style="top:207.3px;color:#262626;-webkit-text-stroke-color:#262626">10</div>
<div class="rn" style="top:219.3px;color:#262626;-webkit-text-stroke-color:#262626">11</div>
<div class="rn" style="top:231.3px;color:#262626;-webkit-text-stroke-color:#262626">12</div>
<div class="rn" style="top:243.3px;color:#262626;-webkit-text-stroke-color:#262626">13</div>
<div class="rn" style="top:255.3px;color:#262626;-webkit-text-stroke-color:#262626">14</div>
<div class="rn" style="top:267.3px;color:#262626;-webkit-text-stroke-color:#262626">15</div>
<div class="rn" style="top:279.3px;color:#262626;-webkit-text-stroke-color:#262626">16</div>
<div class="rn" style="top:291.3px;color:#262626;-webkit-text-stroke-color:#262626">17</div>
<div class="rn" style="top:303.3px;color:#262626;-webkit-text-stroke-color:#262626">18</div>
<div class="rn" style="top:315.3px;color:#262626;-webkit-text-stroke-color:#262626">19</div>
<div class="rn" style="top:327.3px;color:#262626;-webkit-text-stroke-color:#262626">20</div>
<div class="rn" style="top:339.3px;color:#262626;-webkit-text-stroke-color:#262626">21</div>
<div class="rn" style="top:351.3px;color:#262626;-webkit-text-stroke-color:#262626">22</div>
<div class="rn" style="top:363.3px;color:#262626;-webkit-text-stroke-color:#262626">23</div>
<div class="rn" style="top:375.3px;color:#262626;-webkit-text-stroke-color:#262626">24</div>
<div class="rn" style="top:387.3px;color:#262626;-webkit-text-stroke-color:#262626">25</div>
<div class="rn" style="top:399.3px;color:#262626;-webkit-text-stroke-color:#262626">26</div>
<div class="rn" style="top:411.3px;color:#262626;-webkit-text-stroke-color:#262626">27</div>
<div class="rn" style="top:423.3px;color:#262626;-webkit-text-stroke-color:#262626">28</div>
<div class="rn" style="top:435.3px;color:#262626;-webkit-text-stroke-color:#262626">29</div>
<div class="rn" style="top:447.3px;color:#262626;-webkit-text-stroke-color:#262626">30</div>
<div class="rn" style="top:459.3px;color:#262626;-webkit-text-stroke-color:#262626">31</div>
<div class="rn" style="top:471.3px;color:#262626;-webkit-text-stroke-color:#262626">32</div>
<div class="cell" style="left:18px;top:123px;width:57px;height:71px;letter-spacing:-0.1px;"><div><span>Patient ID#</span></div></div>
<div class="cell" style="left:76px;top:123px;width:57px;height:71px;letter-spacing:-0.1px;"><div><span>Site ID#</span></div></div>
<div class="cell" style="left:134px;top:123px;width:57px;height:71px;letter-spacing:-0.1px;"><div><span>Date</span></div></div>
<div class="cell" style="left:192px;top:123px;width:47px;height:71px;letter-spacing:-0.1px;"><div><span>Visit</span><span>Number</span></div></div>
<div class="cell" style="left:240px;top:123px;width:72px;height:71px;letter-spacing:-0.1px;"><div><span>Accidents</span><span>Involving Intent</span><span>to Harm</span></div></div>
<div class="cell" style="left:313px;top:123px;width:52px;height:71px;letter-spacing:-0.1px;"><div><span>Passive</span><span>Ideas</span></div></div>
<div class="cell" style="left:366px;top:123px;width:52px;height:71px;letter-spacing:-0.1px;"><div><span>Number of</span><span>Passive</span><span>Ideas</span></div></div>
<div class="cell" style="left:419px;top:123px;width:50px;height:71px;letter-spacing:-0.1px;"><div><span>Active</span><span>Ideas</span></div></div>
<div class="cell" style="left:470px;top:123px;width:50px;height:71px;letter-spacing:-0.1px;"><div><span>Number of</span><span>Active</span><span>Ideas</span></div></div>
<div class="cell" style="left:521px;top:123px;width:57px;height:71px;letter-spacing:-0.1px;"><div><span>Command</span><span>Hallucinatio</span><span>ns for</span><span>Homicide or</span><span>Homicide</span><span>Dreams</span></div></div>
<div class="cell" style="left:579px;top:123px;width:61px;height:71px;letter-spacing:-0.1px;"><div><span>Command</span><span>Hallucination(</span><span>s) (No=0;</span><span>Yes=1)</span></div></div>
<div class="cell" style="left:641px;top:123px;width:57px;height:71px;letter-spacing:-0.1px;"><div><span>Homicide</span><span>Dream(s)</span><span>(No=0;</span><span>Yes=1)</span></div></div>
<div class="cell" style="left:699px;top:123px;width:57px;height:71px;letter-spacing:-0.1px;"><div><span>Potential</span><span>Targets of</span><span>Homicide</span></div></div>
<div class="cell" style="left:757px;top:123px;width:50px;height:71px;letter-spacing:-0.1px;"><div><span>Method</span></div></div>
<div class="cell" style="left:808px;top:123px;width:50px;height:71px;letter-spacing:-0.1px;"><div><span>Means</span></div></div>
<div class="cell" style="left:859px;top:123px;width:50px;height:71px;letter-spacing:0.2px;"><div><span>Plan Location</span></div></div>
<div class="cell" style="left:910px;top:123px;width:54px;height:71px;letter-spacing:-0.1px;"><div><span>Plan Date</span></div></div>
<div class="cell" style="left:965px;top:123px;width:54px;height:71px;letter-spacing:-0.1px;"><div><span>Unfinished</span><span>Tasks</span></div></div>
<div class="cell" style="left:1020px;top:123px;width:54px;height:71px;letter-spacing:-0.1px;"><div><span>Intent to Act</span></div></div>
<div class="cell" style="left:1075px;top:123px;width:55px;height:71px;letter-spacing:-0.1px;"><div><span>Intent to Act</span></div></div>
<div class="cell" style="left:18px;top:195px;width:57px;height:11px;letter-spacing:-0.5px;"><div><span>123456</span></div></div>
<div class="cell" style="left:76px;top:195px;width:57px;height:11px;letter-spacing:-0.5px;"><div><span>123</span></div></div>
<div class="cell" style="left:134px;top:195px;width:57px;height:11px;letter-spacing:-0.5px;"><div><span>2017-10-20</span></div></div>
<div class="cell" style="left:192px;top:195px;width:47px;height:11px;letter-spacing:-0.5px;"><div><span>1</span></div></div>
<div class="cell" style="left:240px;top:195px;width:72px;height:11px;letter-spacing:-0.3px;"><div><span>Not explored = 0</span></div></div>
<div class="cell" style="left:313px;top:195px;width:52px;height:11px;letter-spacing:-0.5px;"><div><span>2</span></div></div>
<div class="cell" style="left:366px;top:195px;width:52px;height:11px;letter-spacing:-0.5px;"><div><span>20</span></div></div>
<div class="cell" style="left:419px;top:195px;width:50px;height:11px;letter-spacing:-0.5px;"><div><span>3&quot;</span></div></div>
<div class="cell" style="left:470px;top:195px;width:50px;height:11px;letter-spacing:-0.5px;"><div><span>10</span></div></div>
<div class="cell" style="left:521px;top:195px;width:57px;height:11px;letter-spacing:-0.5px;"><div><span>1</span></div></div>
<div class="cell" style="left:579px;top:195px;width:61px;height:11px;letter-spacing:-0.5px;"><div><span>0</span></div></div>
<div class="cell" style="left:641px;top:195px;width:57px;height:11px;letter-spacing:-0.5px;"><div><span>1</span></div></div>
<div class="cell" style="left:699px;top:195px;width:57px;height:11px;letter-spacing:-0.5px;"><div><span>3&quot;</span></div></div>
<div class="cell" style="left:757px;top:195px;width:50px;height:11px;letter-spacing:-0.5px;"><div><span>2&quot;</span></div></div>
<div class="cell" style="left:808px;top:195px;width:50px;height:11px;letter-spacing:-0.5px;"><div><span>2&quot;</span></div></div>
<div class="cell" style="left:859px;top:195px;width:50px;height:11px;letter-spacing:-0.5px;"><div><span>2&quot;</span></div></div>
<div class="cell" style="left:910px;top:195px;width:54px;height:11px;letter-spacing:-0.5px;"><div><span>2&quot;</span></div></div>
<div class="cell" style="left:965px;top:195px;width:54px;height:11px;letter-spacing:-0.5px;"><div><span>2</span></div></div>
<div class="cell" style="left:1020px;top:195px;width:54px;height:11px;letter-spacing:-0.5px;"><div><span>3&quot;</span></div></div>
<div class="cell" style="left:1075px;top:195px;width:55px;height:11px;letter-spacing:-0.5px;"><div><span>2</span></div></div>
<div class="cell" style="left:20.5px;top:207px;width:290px;height:11px;justify-content:flex-start;letter-spacing:-0.17px;"><div><span>In the rows below record the highest score at each visit</span></div></div>
</div>
<span class="t" style="left:19.90px;top:263.50px;font-size:10px;color:#000;letter-spacing:0.134px;">Sponsor:</span>
<span class="t" style="left:19.90px;top:297.50px;font-size:10px;color:#000;letter-spacing:0.330px;">Protocol Number:</span>
<span class="t" style="left:758.60px;top:228.75px;font-size:12.5px;color:#000;letter-spacing:-0.200px;">S-HTS Data Entry Spreadsheet</span>
<div style="position:absolute;left:0px;top:675px;width:1090px;height:29px;background:#e6e6e6;"></div>
<div style="position:absolute;left:0px;top:675px;width:1090px;height:1px;background:#c6c6c6;"></div>
<div style="position:absolute;left:0px;top:702px;width:1090px;height:1px;background:#d2d2d2;"></div>
<div style="position:absolute;left:98px;top:675px;width:189px;height:25px;background:#fff;"></div>
<div style="position:absolute;left:98px;top:698px;width:189px;height:2px;background:#217346;"></div>
<div style="position:absolute;left:286px;top:676px;width:1px;height:22px;background:#c6c6c6;"></div>
<span class="t" style="left:109.60px;top:682.75px;font-size:12.5px;color:#217346;font-weight:bold;letter-spacing:0.202px;">Standard S-HTS Item Entry</span>
<span class="t" style="left:301.10px;top:682.75px;font-size:12.5px;color:#444;letter-spacing:0.095px;">S-HTS CMCM Item Entry</span>
<div style="position:absolute;left:459px;top:680px;width:1px;height:18px;background:#b0b0b0;"></div>
<span class="t" style="left:473.60px;top:682.75px;font-size:12.5px;color:#444;letter-spacing:0.348px;">Total &amp; Factor Scores</span>
<span class="t" style="left:622.90px;top:681.00px;font-size:14px;color:#1e4d33;font-weight:bold;letter-spacing:-0.124px;">...</span>
<svg style="left:25.5px;top:685px" width="4" height="7" viewBox="0 0 4 7"><path d="M4 0V7L0 3.5Z" fill="#c2c2c2"/></svg>
<svg style="left:53.5px;top:685px" width="4" height="7" viewBox="0 0 4 7"><path d="M0 0V7L4 3.5Z" fill="#217346"/></svg>
<svg style="left:646.6px;top:680.4px" width="17" height="17" viewBox="0 0 17 17"><circle cx="8.5" cy="8.5" r="7.5" fill="none" stroke="#767676" stroke-width="1.3"/><path d="M4.5 8.5H12.5M8.5 4.5V12.5" stroke="#6a6a6a" stroke-width="1.8"/></svg>
<div style="position:absolute;left:683px;top:684px;width:1.6px;height:1.6px;background:#b0b0b0;border-radius:1px;"></div>
<div style="position:absolute;left:683px;top:688.5px;width:1.6px;height:1.6px;background:#b0b0b0;border-radius:1px;"></div>
<div style="position:absolute;left:683px;top:693px;width:1.6px;height:1.6px;background:#b0b0b0;border-radius:1px;"></div>
<div style="position:absolute;left:714px;top:682px;width:380px;height:14px;background:#fff;box-sizing:border-box;border:1px solid #c6c6c6;"></div>
<div style="position:absolute;left:700px;top:682px;width:15px;height:14px;background:#fff;box-sizing:border-box;border:1px solid #ababab;"></div>
<svg style="left:705px;top:685.5px" width="4.5" height="7" viewBox="0 0 4.5 7"><path d="M4 0V7L0 3.5Z" fill="#555"/></svg>
</div>
</body>
</html>
